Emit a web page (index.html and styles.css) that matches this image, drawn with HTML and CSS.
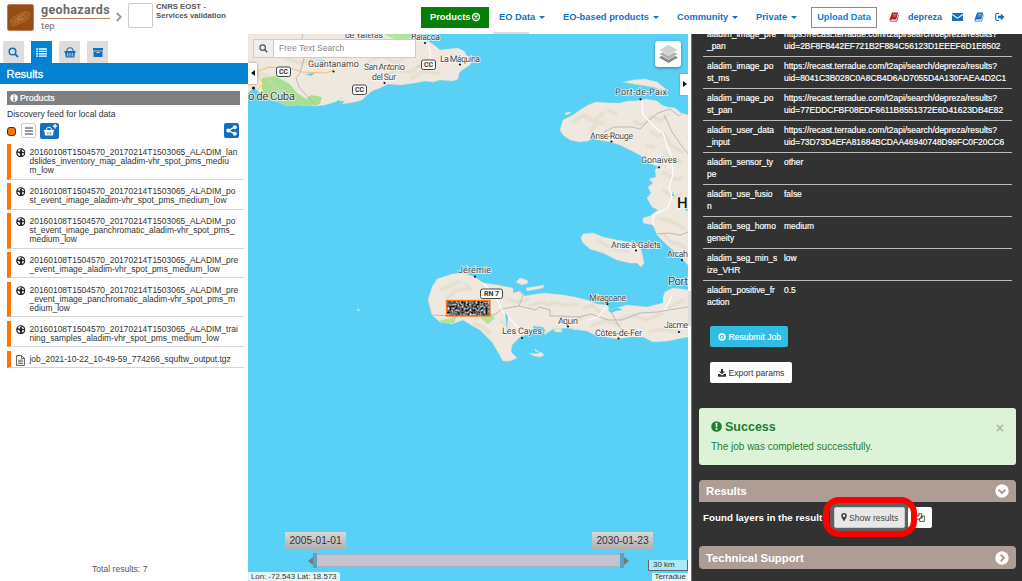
FILE: index.html
```html
<!DOCTYPE html>
<html lang="en">
<head>
<meta charset="utf-8">
<title>Geohazards TEP</title>
<link rel="stylesheet" href="styles.css">
</head>
<body>
<svg class="defs" width="0" height="0">
  <symbol id="globe" viewBox="0 0 18 18"><circle cx="9" cy="9" r="8.700" fill="#262626"/><path d="M4 3.500l4-1.500 1.500 1.500-2 1 .5 1.500-2.500 1L4 6zM11 3l3 1.500 1.500 3-2.500 0-2-2zM2.500 9l3 .5L8 12l-1 3-2-1-2-3zM12 9.500l3 .5-.5 3-2 1.500-1-2z" fill="#fff"/></symbol>
  <symbol id="list" viewBox="0 0 12 10"><path d="M0 .4h2v1.500H0zM3 .4h9v1.500H3zM0 3h2v1.500H0zM3 3h9v1.500H3zM0 5.600h2v1.500H0zM3 5.600h9v1.500H3zM0 8.200h2v1.500H0zM3 8.200h9v1.500H3z" fill="currentColor"/></symbol>
  <symbol id="basket" viewBox="0 0 12 11"><path d="M2.600 4.500C3 1.800 4 .8 6 .8s3 1 3.400 3.700" fill="none" stroke="currentColor" stroke-width="1.100"/><path d="M.4 4h11.200v1.500H11L10.200 10.500H1.800L1 5.500H.4z" fill="currentColor"/><path d="M3.500 6v3.500M5.200 6v3.500M6.900 6v3.500M8.500 6v3.500" stroke="var(--bg,#ddd)" stroke-width=".7"/></symbol>
  <symbol id="book" viewBox="0 0 10 10"><path d="M3.200.6H9.300L7.200 7.500H1.800Q.9 8 1.500 8.700H7.500L9.400 2.500 9.800 3 8 9.500H1.300Q0 9 .7 7z" fill="currentColor"/><path d="M4.300 2.400h3.300M3.800 4h3.300" stroke="#fff" stroke-width=".5"/></symbol>
</svg>
<header class="topbar">
  <div class="brand">
    <svg class="logo" viewBox="0 0 27 27"><rect width="27" height="27" fill="#964d12"/><g fill="none" stroke="#c98d57" stroke-width=".7"><path d="M3 19C3 14 6 13 10 11S20 6 22 8s1 7-3 9-7 2-10 4-6 1-6-2z"/><path d="M5 19c0-4 4-5 7-7s7-4 8-2 0 5-4 6-5 2-7 3-4 1-4 0z"/><path d="M7 18c1-3 4-4 7-6s5-1 4 1-4 3-6 3-4 3-5 2z"/><path d="M10 16c1-2 5-4 6-3s-4 3-6 3z"/></g></svg>
    <div class="brandtext"><span class="geo">geohazards</span><span class="tep">tep</span></div>
    <svg class="crumb" viewBox="0 0 6 10"><path d="M.8 1l4 4-4 4" fill="none" stroke="#999" stroke-width="1.800"/></svg>
    <div class="thumb"></div>
    <div class="project">CNRS EOST -<br>Services validation</div>
  </div>
  <nav class="nav">
    <a class="products">Products <svg viewBox="0 0 10 10"><circle cx="5" cy="5" r="3.500" fill="none" stroke="#fff" stroke-width="1.300"/><path d="M3.500 3.500l3 3m0-3l-3 3" stroke="#fff" stroke-width="1.200"/></svg></a>
    <a class="m1 drop">EO Data</a>
    <a class="m2 drop">EO-based products</a>
    <a class="m3 drop">Community</a>
    <a class="m4 drop">Private</a>
    <a class="upload">Upload Data</a>
    <svg class="i1" viewBox="0 0 10 10"><use href="#book"/></svg>
    <a class="user">depreza</a>
    <svg class="i2" viewBox="0 0 11 9"><path d="M0 .5h11v.7L5.500 5 0 1.200zM0 2.500L5.500 6.200 11 2.500V8.500H0z" fill="currentColor"/></svg>
    <svg class="i3" viewBox="0 0 10 10"><use href="#book"/></svg>
    <svg class="i4" viewBox="0 0 10 10"><path d="M4 1.500H2Q.7 1.500.7 3v4Q.7 8.500 2 8.500h2" fill="none" stroke="currentColor" stroke-width="1.100"/><path d="M3 3.800h2.800V1.600L9.500 5 5.800 8.400V6.200H3z" fill="currentColor"/></svg>
  </nav>
</header>
<main class="main">
  <aside class="left">
    <div class="tabs">
      <div class="tab"><svg width="11" height="11" viewBox="0 0 11 11"><circle cx="4.500" cy="4.500" r="3.300" fill="none" stroke="#1470bd" stroke-width="1.500"/><path d="M7 7l3 3" stroke="#1470bd" stroke-width="1.800"/></svg></div>
      <div class="tab on"><svg width="11" height="9" viewBox="0 0 12 10"><use href="#list"/></svg></div>
      <div class="tab"><svg width="12" height="11"><use href="#basket"/></svg></div>
      <div class="tab"><svg width="10" height="9" viewBox="0 0 10 9"><path d="M0 0h10v2.500H0zM.5 3.200h9V9h-9z" fill="#1470bd"/><path d="M3.500 4.500h3" stroke="#ddd"/></svg></div>
    </div>
    <h2 class="title">Results</h2>
    <div class="feed">
      <div class="bar"><svg width="8" height="8" viewBox="0 0 8 8"><circle cx="4" cy="4" r="3.700" fill="#fff"/><path d="M4 1.200v1.300M4 3.300V6.500M3 6.300h2" stroke="#808080" stroke-width="1.200"/></svg>Products</div>
      <div class="desc">Discovery feed for local data</div>
      <div class="tools"><i class="dot"></i><span class="menu"><svg width="8" height="8" viewBox="0 0 8 8"><path d="M0 1h8M0 4h8M0 7h8" stroke="#333" stroke-width="1.200"/></svg></span><span class="cart"><svg width="18" height="14" viewBox="0 0 18 14"><g transform="translate(4 3.500)"><path d="M2 4C2.500 1.500 3.500.8 5 .8S7.500 1.500 8 4" fill="none" stroke="#fff"/><path d="M0 3.500h10v1.300h-.5L9 9H1L.5 4.800H0z" fill="#fff"/><path d="M3.300 5.500V8M5 5.500V8M6.700 5.500V8" stroke="#1470bd" stroke-width=".6"/></g><path d="M15 1v4.400M12.800 3.200h4.400" stroke="#fff" stroke-width="1.300"/></svg></span><span class="share"><svg width="11" height="11" viewBox="0 0 11 11"><path d="M9 2L2.500 5.500 9 9" fill="none" stroke="#fff" stroke-width="1.400"/><circle cx="8.800" cy="2.200" r="2" fill="#fff"/><circle cx="2.300" cy="5.500" r="2" fill="#fff"/><circle cx="8.800" cy="8.800" r="2" fill="#fff"/></svg></span></div>
      <ul class="items">
        <li><svg><use href="#globe"/></svg><p>20160108T1504570_20170214T1503065_ALADIM_lan<br>dslides_inventory_map_aladim-vhr_spot_pms_mediu<br>m_low</p></li>
        <li><svg><use href="#globe"/></svg><p>20160108T1504570_20170214T1503065_ALADIM_po<br>st_event_image_aladim-vhr_spot_pms_medium_low</p></li>
        <li><svg><use href="#globe"/></svg><p>20160108T1504570_20170214T1503065_ALADIM_po<br>st_event_image_panchromatic_aladim-vhr_spot_pms_<br>medium_low</p></li>
        <li><svg><use href="#globe"/></svg><p>20160108T1504570_20170214T1503065_ALADIM_pre<br>_event_image_aladim-vhr_spot_pms_medium_low</p></li>
        <li><svg><use href="#globe"/></svg><p>20160108T1504570_20170214T1503065_ALADIM_pre<br>_event_image_panchromatic_aladim-vhr_spot_pms_m<br>edium_low</p></li>
        <li><svg><use href="#globe"/></svg><p>20160108T1504570_20170214T1503065_ALADIM_trai<br>ning_samples_aladim-vhr_spot_pms_medium_low</p></li>
        <li><svg class="doc" viewBox="0 0 9 11"><path d="M.6.6h5L8.400 3.400v7H.6z" fill="#fff" stroke="#444" stroke-width=".9"/><path d="M5.500.6v3h3M2.200 5.200h4.600M2.200 6.800h4.600M2.200 8.400h4.600" fill="none" stroke="#444" stroke-width=".8"/></svg><p>job_2021-10-22_10-49-59_774266_squftw_output.tgz</p></li>
      </ul>
    </div>
    <div class="total">Total results: 7</div>
  </aside>
  <section class="map">
    <svg class="canvas" viewBox="248 34 440 547">
      <defs>
        <filter id="noise" x="0" y="0" width="1" height="1" color-interpolation-filters="sRGB"><feTurbulence type="fractalNoise" baseFrequency=".5" numOctaves="2" seed="4"/><feColorMatrix values="1.700 0 0 0 -.45 1.700 0 0 0 -.45 1.700 0 0 0 -.45 0 0 0 0 1"/></filter>
        <filter id="soft"><feGaussianBlur stdDeviation=".9"/></filter>
        <clipPath id="land">
          <path id="cuba" d="M248 34H417L422 38 428 41 434 45 440 50 449 49 458 48 464 51 467 56 472 59 470 65 462 70 459 73 458 79 453 81 440 80 433 82 425 81 415 83 400 85 388 84 380 88 372 91 366 96 362 100 355 102 342 104 345 101 339 101 341 97 337 92 339 87 347 84 349 87 345 92 349 96 342 98 335 102 325 105 316 106 297 105 288 106 278 102 270 100 262 95 258 91 254 88 248 93z"/>
          <path id="north" d="M560 130L563 120 573 115 580 110 588 105 596 102 608 103 620 103 628 101 635 101 646 99 657 101 662 105 667 107 675 108 681 113 688 115V265L680 257 673 250 667 245 657 235 653 225 643 223 643 218 650 216 658 210 652 207 647 198 651 193 648 187 653 183 649 179 656 177 655 170 658 167 648 162 640 155 630 150 620 145 610 142 600 140 592 138 588 141 580 142 570 140 563 135z"/>
          <path id="south" d="M428 300L432 287 437 279 452 274 463 273 475 277 483 283 498 285 507 287 513 288 513 293 520 291 525 296 543 293 563 295 575 297 587 300 597 304 607 305 610 310 627 305 647 307 663 303 663 297 665 292 673 288 688 290V337L677 339 668 341 653 342 643 337 630 337 617 339 606 337 597 336 587 331 580 330 567 328 553 329 547 333 543 327 533 326 533 332 520 337 512 345 511 352 517 358 510 361 503 361 498 352 492 342 480 330 471 325 463 320 452 324 440 322 432 315z"/>
          <path id="gonave" d="M581 238L583 234 593 233 603 237 617 240 635 243 640 247 642 253 644 263 641 267 637 263 630 263 617 260 603 253 590 249 583 243z"/>
        </clipPath>
      </defs>
      <rect x="248" y="34" width="440" height="547" fill="#59d0f5"/>
      <g fill="#efe8df" stroke="#e3dccb" stroke-width=".4">
        <use href="#cuba"/><use href="#north"/><use href="#south"/><use href="#gonave"/>
        <path d="M623 82L633 80 645 79 657 82 666 89 662 90 653 87 640 85zM516 282l4-4 7 2 1 3-6 2zM526 288l7-1 11-2-1 3-10 2-6 1zM529 353l7 1 5-2 3 3-3 2-7-1zM535 349l4 3-4-1zM565 113l5-1 1 1-5 2zM553 330l8-2 1 4h-6zM573 328l6 1-5 1zM357 309l3 1-2 1zM544 331l3 2-2 2z"/>
      </g>
      <g clip-path="url(#land)">
        <path d="M262 78L275 76 290 84 296 92 306 99 311 95 322 97 320 104 308 107H290L262 96z" fill="#a9df92"/>
        <path d="M384 34h40v3l-12 1-12 3-8-3zM440 320l8-1 9-3-3 7-11 1zM480 318l9-6 6 6-7 6z" fill="#b2e29d"/>
        <g filter="url(#soft)" fill="none" stroke="#d7d5bd" stroke-width="2.200" opacity=".75">
          <path d="M350 48l12-4 9 6 14-4 11 7M368 61l13-5 15 6 10-5M383 80l12-10 15 2 14-9M410 79l14-8 16 3M253 72l14 4 7 11 13 8M285 58l16 5 22-6"/>
          <path d="M572 122l12-7 9 6 11-8M590 133l7-11 8 2M607 110l10 4M633 121l9 4 11-9 8 5 7-6M650 131l8 5 7-2 5 11 14 8M646 145l9 3M663 151l7 7 13 5M662 172l14 8 7-3M663 190l10 7 9-3M659 218l14 4 12 7M663 234l8 8 11 3 5 8"/>
          <path d="M440 290l12-5 8-4M446 299l9-8 15-3M465 283l7 8M451 312l17 2 10 4M474 323l10 5 6 6M501 320l8 8M507 299l11 3 12-3M528 306l13-4 11 4M550 302l15 3 14-1M583 309l9-4 9 8M560 317l14 3 10-4M591 326l13-5 17 4M618 319l16-4 12 5 17-7M648 332l14-3 19 3M667 308l17-8M597 240l15 8 18 4"/>
        </g>
        <path d="M303 34l-4 15 5 10-4 14-4 5 3 9 7 8 11 11M604 132l10-5h18l8 2 8-8 10-8 12-4 9 7 5-4M664 115l4 8 4 9 9 13 10 12M657 234l12-1 11 2 8-3M429 315l28 1 16-3 21 2 8-6 5-1 12-2 4-11-8-9 11-3M519 306l17 4 3-3 11 3v6h10l19 1 12-3 17 6h14l18-7 17-1 31-5M612 313l6 12 8 10" fill="none" stroke="#b6b3b5" stroke-width=".9"/>
        <path d="M428 43l2 9 1 15M642 101l1 14 14 14 6 4 4 12 4 10 2 20-4 12 3 10-5 12-14 6v14M480 280l14 14 9 18 17 17M606 307l-8 10-10 3M665 310l7-14" fill="none" stroke="#fff" stroke-width="1.100"/>
        <path d="M258 71l11-4 21 1 12 4 24 1 8-3" fill="none" stroke="#fabb76" stroke-width="1.100"/><path d="M248 69l8 2 7 13-9 9" fill="none" stroke="#f6c964"/>
        <path d="M305 74l10-1-4 3zM316 60h7l4 2-4-1zM611 306l8 2 4 2-7 1-5 2-3-3zM672 196l1-5 1 5M685 210l1-5 2 6M505 312l3 5-1 12" fill="#59d0f5"/>
      </g>
      <rect x="446" y="300" width="44" height="16" filter="url(#noise)"/><rect x="446.500" y="300.500" width="43.500" height="15.500" fill="none" stroke="#f57916" stroke-width="1.300"/>
      <g class="shields"><rect x="276.500" y="67" width="14" height="9.500" rx="2"/><rect x="352.500" y="85" width="14" height="9.500" rx="2"/><rect x="421.500" y="60" width="14" height="9.500" rx="2"/><rect x="480.500" y="289" width="22" height="9.500" rx="2"/></g>
      <g class="routes"><text x="283.500" y="74.300">CC</text><text x="359.500" y="92.300">CC</text><text x="428.500" y="67.300">CC</text><text x="491.500" y="296.300">RN 7</text></g>
      <g class="names">
        <text x="308" y="67" textLength="51">Guantanamo</text><text x="364" y="70" textLength="41">San Antonio</text><text x="372" y="79.500" textLength="24">del Sur</text><text x="440" y="61.500" textLength="40">La Máquina</text><text x="411" y="40" textLength="29">Baracoa</text><text x="345" y="37.500" textLength="38">de Yateras</text>
        <text x="615" y="94.500" textLength="52">Port-de-Paix</text><text x="590" y="138.500" textLength="43">Anse-Rouge</text><text x="641" y="163" textLength="36">Gonaïves</text><text x="611" y="248" textLength="50">Anse-à-Galets</text><text x="667" y="256.500" textLength="21">Arcah</text>
        <text x="458" y="272.500" textLength="33">Jérémie</text><text x="589" y="301" textLength="37">Miragoane</text><text x="558" y="323.500" textLength="20">Aquin</text><text x="502" y="334" textLength="40">Les Cayes</text><text x="595" y="336" textLength="47">Côtes-de-Fer</text><text x="664" y="328" textLength="24">Jacme</text>
        <text class="big" x="248" y="99.500" textLength="47">o de Cuba</text><text class="big" x="668" y="284.500" textLength="20">Port</text><text class="country" x="677" y="208">H</text>
      </g>
      <g fill="#111"><circle cx="333.500" cy="71.500" r="1.100"/><circle cx="384.500" cy="83" r="1.100"/><circle cx="460" cy="64.500" r="1.100"/><circle cx="425" cy="43" r="1.100"/><circle cx="253.500" cy="88" r="1.500"/><circle cx="640.500" cy="99.300" r="1.100"/><circle cx="611.500" cy="141.500" r="1.100"/><circle cx="659" cy="167.300" r="1.100"/><circle cx="636" cy="250.500" r="1.100"/><circle cx="682" cy="260" r="1.100"/><circle cx="475" cy="276.700" r="1.100"/><circle cx="607.500" cy="304" r="1.100"/><circle cx="568" cy="326.500" r="1.100"/><circle cx="522" cy="338" r="1.100"/><circle cx="618.500" cy="338.500" r="1.100"/><circle cx="679" cy="332" r="1.100"/></g>
    </svg>
    <div class="search"><span><svg width="9" height="9" viewBox="0 0 11 11"><circle cx="4.500" cy="4.500" r="3.300" fill="none" stroke="#555" stroke-width="1.500"/><path d="M7 7l3 3" stroke="#555" stroke-width="1.800"/></svg></span><div>Free Text Search</div></div>
    <div class="toggle west"></div>
    <div class="layers"><svg width="19" height="20" viewBox="0 0 19 20"><path d="M9.500 8L19 13.500 9.500 19 0 13.500z" fill="#888"/><path d="M9.500 4.500L19 10 9.500 15.500 0 10z" fill="#b0b0b0" stroke="#fff" stroke-width=".6"/><path d="M9.500 0.500L19 6 9.500 11.500 0 6z" fill="#d0d0d0" stroke="#fff" stroke-width=".6"/></svg></div>
    <div class="toggle east"></div>
    <div class="date from">2005-01-01</div><div class="date to">2030-01-23</div>
    <div class="range"><i class="h1"></i><i class="h2"></i></div>
    <div class="lonlat">Lon: -72.543 Lat: 18.573</div>
    <div class="scale">30 km</div><div class="attrib">Terradue</div>
  </section>
  <div class="gutter"><i></i></div>
  <aside class="right">
    <div class="params">
      <div class="row"><span>aladim_image_pre<br>_pan</span><span>https://recast.terradue.com/t2api/search/depreza/results?<br>uid=2BF8F8442EF721B2F884C56123D1EEEF6D1E8502</span></div>
      <div class="row"><span>aladim_image_po<br>st_ms</span><span>https://recast.terradue.com/t2api/search/depreza/results?<br>uid=8041C3B028C0A8CB4D6AD7055D4A130FAEA4D2C1</span></div>
      <div class="row"><span>aladim_image_po<br>st_pan</span><span>https://recast.terradue.com/t2api/search/depreza/results?<br>uid=77EDDCFBF08EDF6611B8551372E6D41623DB4E82</span></div>
      <div class="row"><span>aladim_user_data<br>_input</span><span>https://recast.terradue.com/t2api/search/depreza/results?<br>uid=73D73D4EFA81684BCDAA46940748D99FC0F20CC6</span></div>
      <div class="row"><span>aladim_sensor_ty<br>pe</span><span>other</span></div>
      <div class="row"><span>aladim_use_fusio<br>n</span><span>false</span></div>
      <div class="row"><span>aladim_seg_homo<br>geneity</span><span>medium</span></div>
      <div class="row"><span>aladim_seg_min_s<br>ize_VHR</span><span>low</span></div>
      <div class="row"><span>aladim_positive_fr<br>action</span><span>0.5</span></div>
    </div>
    <div class="btn resubmit"><svg width="8" height="8" viewBox="0 0 8 8"><circle cx="4" cy="4" r="2.900" fill="none" stroke="#fff" stroke-width="1.500"/><path d="M3 2.400L5.700 4 3 5.600z" fill="#fff"/></svg>Resubmit Job</div>
    <div class="btn export"><svg width="8" height="8" viewBox="0 0 8 8"><path d="M3 0h2v2.500h2L4 5.300 1 2.500h2zM0 5h2l2 1.500L6 5h2v2.800H0z" fill="#333"/></svg>Export params</div>
    <div class="alert"><div class="head"><svg width="11" height="11" viewBox="0 0 11 11"><circle cx="5.500" cy="5.500" r="5.300" fill="#1e7e34"/><path d="M4.500 1.700h2L6.200 6.500H4.800zM4.600 7.300h1.800v1.700H4.600z" fill="#dcf3d8"/></svg>Success<span class="close">×</span></div><div class="msg">The job was completed successfully.</div></div>
    <div class="section open">Results<svg width="14" height="14" viewBox="0 0 14 14"><circle cx="7" cy="7" r="6.700" fill="#fff"/><path d="M3.700 5.700L7 9l3.300-3.300" fill="none" stroke="#ae9d94" stroke-width="2"/></svg></div>
    <div class="found"><b>Found layers in the result</b><div class="show"><svg width="6" height="9" viewBox="0 0 6 9"><path d="M3 0a2.800 2.800 0 012.800 2.800C5.800 5 4 6 3 8.700 2 6 .2 5 .2 2.800A2.800 2.800 0 013 0zm0 1.600a1.200 1.200 0 100 2.400 1.200 1.200 0 000-2.400z" fill="#444" fill-rule="evenodd"/></svg>Show results</div><div class="copy"><svg width="9" height="9" viewBox="0 0 9 9"><path d="M3 2.800V.6h2.700v4.500M3 .6L.6 3v3.300H3.500M3 2.800H.8M6 3h2.400v5.400H3.600V5.200L6 3v2.300H3.800" fill="none" stroke="#333" stroke-width=".8"/></svg></div><i class="ring"></i></div>
    <div class="section">Technical Support<svg width="14" height="14" viewBox="0 0 14 14"><circle cx="7" cy="7" r="6.700" fill="#fff"/><path d="M5.700 3.700L9 7l-3.300 3.300" fill="none" stroke="#ae9d94" stroke-width="2"/></svg></div>
  </aside>
</main>
</body>
</html>
```
FILE: styles.css
```css
* { box-sizing: border-box; }
body { margin: 0; width: 1022px; height: 581px; overflow: hidden; background: #fff; color: #333; font-family: "Liberation Sans", Arial, sans-serif; font-size: 8.45px; display: flex; flex-direction: column; }
.defs { position: absolute; }
h2, p, ul { margin: 0; padding: 0; }
.topbar { height: 34px; flex: none; display: flex; }
.brand { width: 421px; display: flex; }
.logo { width: 27px; height: 27px; margin: 4px 0 0 7px; border: 1px solid #b98155; border-radius: 2px; }
.brandtext { margin-left: 7px; width: 69px; height: 32px; display: flex; flex-direction: column; color: #6b6b6b; font-family: Roboto, sans-serif; }
.geo { font-size: 12.5px; font-weight: 700; line-height: 15px; padding-top: 2px; height: 20px; border-bottom: 1px solid #c0805e; letter-spacing: .34px; }
.tep { font-size: 9.500px; line-height: 13px; font-weight: 500; color: #8a8a8a; }
.crumb { width: 6px; height: 10px; margin: 12px 0 0 6px; }
.thumb { width: 25px; height: 25px; margin: 3px 0 0 6px; border: 1px solid #ccc; border-radius: 2px; }
.project { margin: 3px 0 0 3px; font-size: 7.730px; font-weight: 700; line-height: 8.700px; color: #555; }
.nav { display: flex; align-items: center; flex: 1; height: 34px; color: #1470bd; font-size: 9.330px; font-weight: 700; white-space: nowrap; }
.nav > svg { width: 10px; height: 10px; flex: none; }
.nav > a { height: 21px; line-height: 21px; flex: none; }
.nav .products { width: 68px; background: #067f06; color: #fff; padding-left: 9px; display: flex; align-items: center; gap: 1px; }
.products svg { width: 10px; height: 10px; }
.nav .m1 { width: 54px; margin-left: 10px; position: relative; }
.m1::before { content: ""; position: absolute; left: -6px; top: 25px; width: 36px; height: 2px; background: #ddd; }
.nav .m2 { width: 104px; margin-left: 10px; }
.nav .m3 { width: 79px; margin-left: 10px; }
.nav .m4 { width: 55px; }
.drop::after { content: ""; display: inline-block; margin-left: 4px; border: 3px solid transparent; border-top-color: currentColor; border-bottom: 0; vertical-align: 1px; }
.nav .upload { width: 66px; border: 1px solid #8a8a8a; color: #0b83d3; line-height: 19px; text-align: center; font-size: 9.200px; }
.nav .i1 { margin-left: 12px; color: #b51a1a; }
.nav .user { margin-left: 9px; width: 36px; font-size: 9px; }
.nav .i2 { margin-left: 8px; width: 11px; }
.nav .i3 { margin-left: 11px; }
.nav .i4 { margin-left: 11px; }
.main { display: flex; height: 547px; }
.left { width: 248px; display: flex; flex-direction: column; }
.tabs { display: flex; gap: 7px; padding: 7px 0 0 3px; height: 29px; color: #1470bd; }
.tab { width: 21px; height: 22px; background: #ddd; display: flex; align-items: center; justify-content: center; }
.tab.on { background: #0381d3; color: #fff; }
.title { height: 21px; background: #0381d3; color: #fff; font-size: 11px; font-weight: 400; line-height: 22px; padding-left: 6.500px; -webkit-text-stroke: .3px #fff; }
.feed { padding: 7px 4px 0 7px; }
.bar { width: 233px; height: 14px; background: #808080; color: #fff; line-height: 14px; display: flex; align-items: center; gap: 2px; padding-left: 3px; font-size: 8.800px; -webkit-text-stroke: .2px #fff; }
.desc { line-height: 12px; padding-top: 3px; font-size: 8.600px; }
.tools { height: 24px; display: flex; align-items: center; padding-bottom: 3px; }
.dot { width: 9px; height: 9px; border: 1px solid #333; border-radius: 3px; background: #ff7300; margin-top: 1px; }
.menu { width: 15px; height: 15px; margin-left: 5px; border: 1px solid #ccc; border-radius: 2px; display: flex; align-items: center; justify-content: center; }
.cart { width: 19px; height: 16px; margin-left: 4px; background: #1470bd; border-radius: 2px; }
.share { width: 15px; height: 15px; margin-left: 165px; background: #1470bd; border-radius: 2px; display: flex; align-items: center; justify-content: center; }
.items { list-style: none; display: flex; flex-direction: column; gap: 3.300px; }
.items li { border-left: 4px solid #ff7300; border-bottom: 1px solid #d5d5d5; padding: 4px 0 3.050px 5px; display: flex; gap: 4px; line-height: 9.240px; white-space: nowrap; }
.items svg { width: 9.500px; height: 9.500px; flex: none; }
.items .doc { width: 9px; height: 11px; margin-bottom: -2px; margin-right: .5px; }
.total { margin: auto 0 6px 92px; font-size: 8.600px; line-height: 12px; color: #555; }
.map { width: 440px; position: relative; overflow: hidden; }
.canvas { display: block; width: 440px; height: 547px; }
.shields { fill: #fff; stroke: #444; stroke-width: 1; }
.routes { font: 700 7px Roboto, sans-serif; text-anchor: middle; fill: #333; text-rendering: geometricPrecision; }
.names { font: 9px Roboto, sans-serif; fill: #444; stroke: #fff; stroke-width: 1.600px; stroke-opacity: .75; paint-order: stroke; text-rendering: geometricPrecision; }
.names .big { font-size: 11.500px; }
.names .country { font-size: 15px; font-weight: 500; fill: #111; }
.search { position: absolute; left: 5px; top: 5px; width: 163px; height: 19px; display: flex; border: 1px solid #ccc; background: #fff; color: #888; font-size: 8.600px; line-height: 17px; }
.search span { width: 20px; background: #eee; border-right: 1px solid #ccc; display: flex; align-items: center; justify-content: center; }
.search div { padding-left: 5px; }
.toggle { position: absolute; width: 9px; height: 21px; background: #fff; box-shadow: 0 0 2px #777; }
.toggle::after { content: ""; position: absolute; top: 7px; left: 3px; border: 3px solid transparent; }
.west { left: 0; top: 29px; }
.west::after { border-right: 4px solid #111; border-left: 0; }
.east { right: 0; top: 40px; width: 8px; }
.east::after { border-left: 4px solid #111; border-right: 0; }
.layers { position: absolute; left: 407px; top: 7px; width: 26px; height: 26px; border-radius: 3px; background: #fff; box-shadow: 0 1px 3px #0006; display: flex; align-items: center; justify-content: center; }
.date { position: absolute; top: 498px; width: 61px; height: 17px; text-align: center; font-size: 10.200px; line-height: 17px; background: linear-gradient(#d9d9d9, #b0b0b0); color: #333; }
.date::after { content: ""; position: absolute; left: 27px; top: 17px; border: 4px solid transparent; border-top-color: #b0b0b0; border-bottom: 0; }
.from { left: 37px; }
.to { left: 344px; }
.range { position: absolute; left: 66px; top: 520px; width: 309px; height: 13px; background: #c6c2d0; border: 1px solid #9cb5cc; }
.range i { position: absolute; top: -2px; width: 4px; height: 15px; background: #5da0c4; }
.h1 { left: -2px; }
.h2 { right: -2px; }
.range i::after { content: ""; position: absolute; top: 4px; border: 4px solid transparent; }
.h1::after { right: 4px; border-right: 5px solid #777 !important; border-left: 0 !important; }
.h2::after { left: 4px; border-left: 5px solid #777 !important; border-right: 0 !important; }
.lonlat { position: absolute; left: 0; bottom: 0; width: 92px; height: 9px; background: #e3f6fd; border-radius: 0 3px 0 0; font-size: 7.850px; line-height: 9px; padding-left: 3px; white-space: nowrap; }
.scale { position: absolute; left: 400px; top: 526px; width: 40px; height: 11px; background: #ace7fa; border: 1px solid #666; border-top: 0; font-size: 8px; line-height: 10px; padding-left: 4px; }
.attrib { position: absolute; right: 0; bottom: 0; width: 36px; height: 8px; background: #ddf4fc; font-size: 8px; line-height: 8px; text-align: right; padding-right: 2px; }
.gutter { width: 4px; background: #fff; border-right: 1px solid #777; padding-top: 257px; }
.gutter i { display: block; height: 35px; background: #ddd; }
.right { width: 330px; background: #323232; color: #fff; overflow: hidden; padding: 0 6px 0 7px; }
.params { margin: -10px 4px 0; font-size: 8.430px; line-height: 12px; -webkit-text-stroke: .18px #fff; }
.row { height: 32px; border-top: 1px solid #bbb; padding: 3px 0 0 4px; display: flex; white-space: nowrap; }
.row span:first-child { width: 77px; }
.btn { height: 21px; border-radius: 2px; margin-left: 11px; display: flex; align-items: center; gap: 2.500px; padding-left: 8px; font-size: 8.600px; white-space: nowrap; }
.resubmit { width: 78px; margin-top: 14px; background: #2fbde2; -webkit-text-stroke: .15px #fff; }
.export { width: 82px; margin-top: 15px; background: #fff; color: #333; }
.alert { margin-top: 25px; height: 57px; border-radius: 3px; background: #dcf3d8; color: #1e7e34; padding: 10px 12px; }
.head { display: flex; align-items: center; height: 17px; gap: 3px; font-size: 12.500px; font-weight: 700; }
.close { margin-left: auto; color: #a9bfa7; font-size: 14px; padding-top: 3px; }
.msg { font-size: 10px; line-height: 12px; margin-top: 6px; }
.section { height: 23px; background: #ae9d94; border-radius: 4px; display: flex; align-items: center; justify-content: space-between; padding: 0 7px; font-size: 11.300px; font-weight: 700; }
.open { margin-top: 15px; border-radius: 4px 4px 0 0; height: 22px; }
.found { height: 44px; display: flex; align-items: flex-start; padding: 5px 0 0 4px; position: relative; }
.found b { width: 131px; font-size: 9.800px; line-height: 21px; white-space: nowrap; }
.show { width: 71px; height: 21px; border: 1px solid #ccc; border-radius: 2px; background: #e8e8e8; color: #444; display: flex; align-items: center; gap: 2px; padding-left: 6px; font-size: 8.600px; white-space: nowrap; box-shadow: 0 0 0 4px #606063; }
.copy { width: 24px; height: 21px; margin-left: 3px; border-radius: 2px; background: #fff; display: flex; align-items: center; padding-left: 8px; }
.ring { position: absolute; left: 124px; top: -5px; width: 94px; height: 40px; border: 6px solid #f00; border-radius: 16px; }
```
